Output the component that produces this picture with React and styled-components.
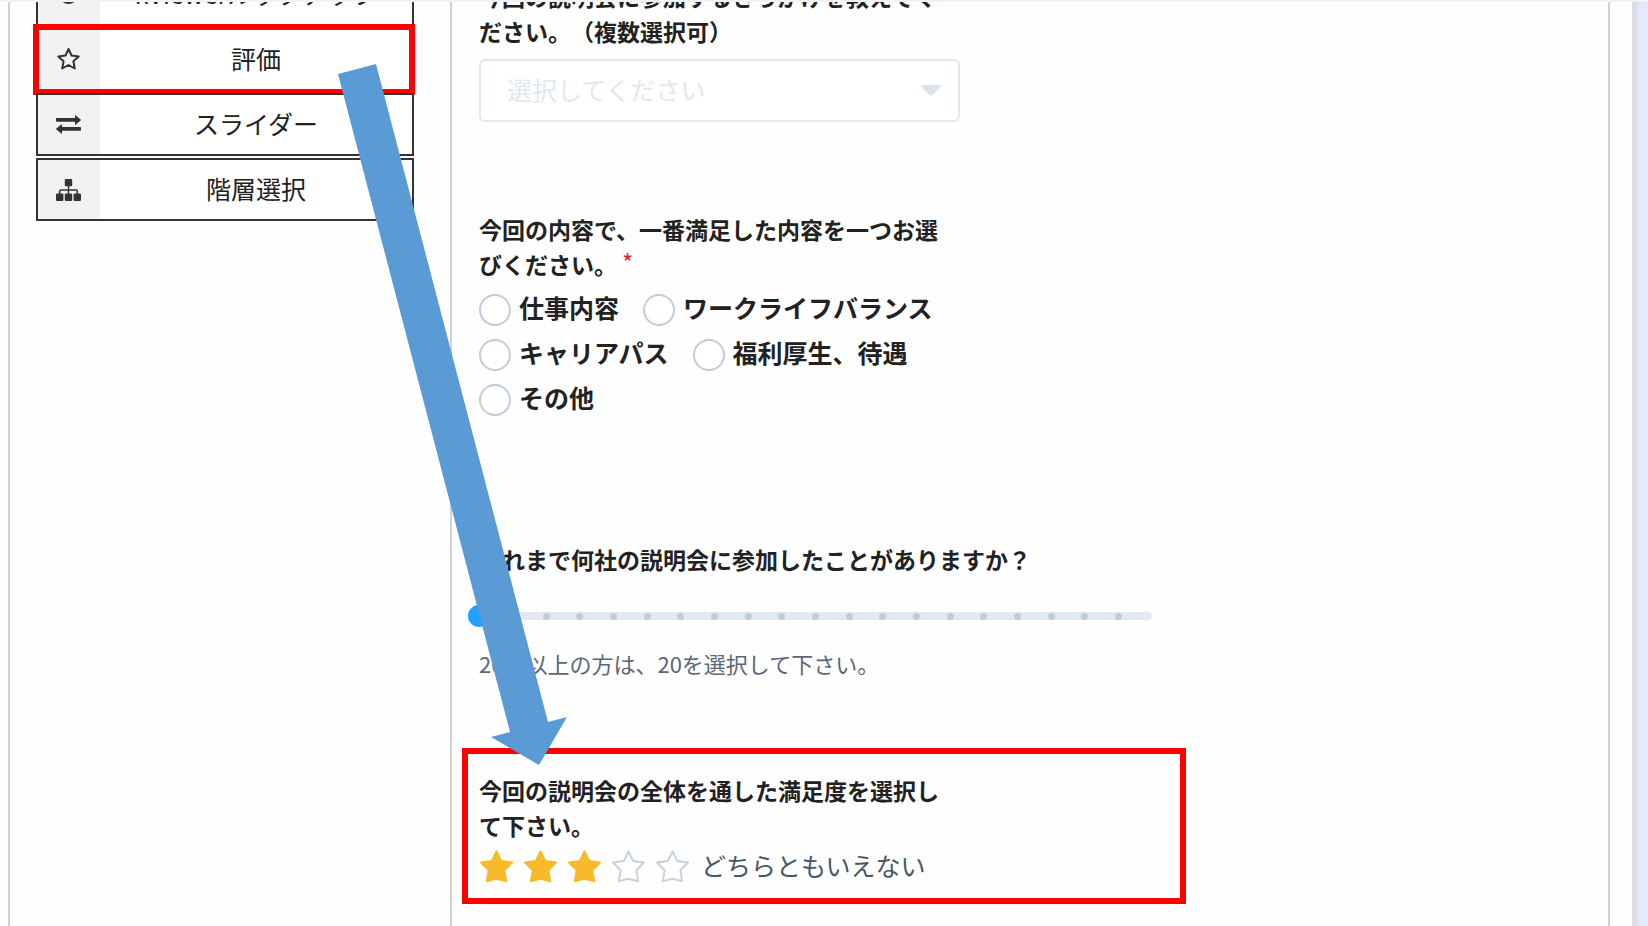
import React, { useState } from 'react';
import styled, { createGlobalStyle, css } from 'styled-components';

const GlobalStyle = createGlobalStyle`
  * {
    box-sizing: border-box;
  }

  body {
    margin: 0;
    background: #fefefe;
    color: #222222;
    font-family: 'Noto Sans CJK JP', 'Noto Sans', sans-serif;
    font-size: 25px;
    line-height: 35px;
    text-spacing-trim: space-all;
  }
`;

const Page = styled.div`
  position: relative;
  height: 100vh;
  display: flex;
  border-top: 2px solid #f2f2f2;
  overflow: hidden;
`;

const Sheet = styled.div`
  flex: 1;
  display: flex;
  padding: 0 22px 0 8px;
`;

const Gutter = styled.div`
  width: 16px;
  background: linear-gradient(to right, #dcdcde 0, #d9dded 4px, #e4eafa 8px);
`;

const Sidebar = styled.aside`
  width: 444px;
  padding: 0 36px 0 26px;
  border: solid #d2d2d2;
  border-width: 0 2px;
`;

const PartList = styled.ul`
  display: flex;
  flex-direction: column;
  gap: 2px;
  margin: -39px 0 0;
  padding: 0;
  list-style: none;
`;

const PartItem = styled.li`
  position: relative;
`;

const PartButton = styled.button`
  display: flex;
  width: 100%;
  height: 63px;
  padding: 0;
  border: 2px solid #333333;
  background: #ffffff;
  color: #222222;
  font: inherit;
  cursor: pointer;
`;

const PartIcon = styled.span`
  display: flex;
  align-items: center;
  justify-content: center;
  width: 62px;
  height: 100%;
  padding-right: 2px;
  background: #f2f2f2;
  color: #333333;
`;

const PartName = styled.span`
  flex: 1;
  align-self: center;
  padding-bottom: 3px;
`;

const Highlight = styled.div`
  position: absolute;
  inset: ${(props) => props.$inset};
  border: 6px solid #ff0000;
  pointer-events: none;
`;

const Main = styled.main`
  flex: 1;
  border-right: 2px solid #d2d2d2;
  overflow: hidden;
`;

const Form = styled.form`
  display: flex;
  flex-direction: column;
  gap: 90px;
  max-width: 727px;
  margin: -23px 0 0;
  padding: 0 27px;
`;

const Field = styled.div`
  position: relative;
  padding-bottom: ${(props) => props.$space || 0}px;
`;

const Group = styled.fieldset`
  min-width: 0;
  margin: 0;
  padding: 0;
  border: 0;
`;

const titleStyle = css`
  display: block;
  padding: 0;
  font-size: 23px;
  font-weight: 700;
`;

const Title = styled.label`
  ${titleStyle}
  max-width: ${(props) => (props.$wide ? 'none' : '480px')};
`;

const Legend = styled.legend`
  ${titleStyle}
  max-width: 480px;
`;

const Required = styled.span`
  margin-left: 5px;
  color: #e02020;
  font-size: 24px;
  font-weight: 400;
  line-height: 1;
  vertical-align: 2px;
`;

const SelectBox = styled.div`
  position: relative;
  max-width: 481px;
  margin-top: 10px;

  svg {
    position: absolute;
    top: 26px;
    right: 19px;
    pointer-events: none;
  }
`;

const Select = styled.select`
  display: block;
  width: 100%;
  height: 63px;
  padding: 0 26px 3px;
  border: 2px solid #e2e8f0;
  border-radius: 6px;
  background: #ffffff;
  color: #e2e8f0;
  font: inherit;
  appearance: none;
`;

const Options = styled.div`
  display: flex;
  flex-wrap: wrap;
  column-gap: 24px;
  max-width: 480px;
  padding-top: 4px;
`;

const Option = styled.label`
  display: flex;
  align-items: center;
  gap: 8px;
  height: 45px;
  padding-bottom: 2px;
  font-weight: 700;
`;

const Radio = styled.input`
  width: 32px;
  height: 32px;
  margin: 5px 0 0;
  border: 2px solid #c0ccda;
  border-radius: 50%;
  background: #ffffff;
  appearance: none;

  &:checked {
    border: 10px solid #20a0ff;
  }
`;

const SliderTrack = styled.div`
  position: relative;
  height: 8px;
  margin: 35px 0 26px;
  border-radius: 4px;
  background: #e4e8f1;
`;

const Steps = styled.div`
  display: grid;
  grid-template-columns: repeat(19, 1fr);
  align-items: center;
  justify-items: center;
  height: 8px;
  padding: 0 2.5%;
`;

const Step = styled.span`
  width: 7px;
  height: 7px;
  border-radius: 50%;
  background: #c0ccda;
`;

const Slider = styled.input`
  position: absolute;
  top: -7px;
  left: -11px;
  width: calc(100% + 22px);
  height: 22px;
  margin: 0;
  background: transparent;
  appearance: none;

  &::-webkit-slider-thumb {
    width: 22px;
    height: 22px;
    border-radius: 50%;
    background: #20a0ff;
    appearance: none;
  }
`;

const Help = styled.p`
  margin: 0;
  color: #5a6778;
  font-size: 22px;
`;

const Rating = styled.div`
  display: flex;
  align-items: center;
  gap: 9px;
  height: 36px;
  margin-top: 5px;
`;

const StarLabel = styled.label`
  position: relative;
  display: flex;
  width: 35px;
  cursor: pointer;
`;

const StarInput = styled.input`
  position: absolute;
  inset: 0;
  margin: 0;
  opacity: 0;
`;

const RatingText = styled.output`
  padding: 0 0 2px 2px;
  color: #475669;
`;

const ArrowOverlay = styled.svg`
  position: absolute;
  top: -2px;
  left: 0;
  pointer-events: none;
`;

const CircleIcon = () => (
  <svg width="25" height="25" viewBox="0 0 25 25" aria-hidden="true">
    <circle cx="12.5" cy="12.5" r="8" fill="none" stroke="currentColor" strokeWidth="3" />
  </svg>
);

const StarIcon = () => (
  <svg width="25" height="25" viewBox="0 0 25 25" aria-hidden="true">
    <path
      d="M12.5 2 L15.500 8.500 L22.700 9.400 L17.400 14.200 L18.800 21.500 L12.5 18 L6.200 21.500 L7.600 14.200 L2.300 9.400 L9.500 8.500 Z"
      fill="none"
      stroke="currentColor"
      strokeWidth="2"
      strokeLinejoin="round"
    />
  </svg>
);

const ExchangeIcon = () => (
  <svg width="25" height="19" viewBox="0 0 25 19" aria-hidden="true">
    <g fill="currentColor">
      <path d="M0.800 3 H19 V0.500 Q19 -0.200 19.800 0.400 L24.600 4.500 Q25.200 5 24.600 5.500 L19.800 9.600 Q19 10.200 19 9.400 V6.800 H0.800 Q0 6.800 0 6 V3.800 Q0 3 0.800 3 Z" />
      <path d="M24.200 12 H6 V9.600 Q6 8.800 5.200 9.400 L0.400 13.400 Q-0.200 13.900 0.400 14.400 L5.200 18.500 Q6 19.100 6 18.300 V15.800 H24.200 Q25 15.800 25 15 V12.800 Q25 12 24.200 12 Z" />
    </g>
  </svg>
);

const SitemapIcon = () => (
  <svg width="25" height="22" viewBox="0 0 25 22" aria-hidden="true">
    <g fill="currentColor">
      <rect x="8.800" y="0" width="7.400" height="7.200" rx="1" />
      <rect x="0" y="14.600" width="7.400" height="7.400" rx="1" />
      <rect x="8.800" y="14.600" width="7.400" height="7.400" rx="1" />
      <rect x="17.600" y="14.600" width="7.400" height="7.400" rx="1" />
    </g>
    <path d="M12.5 7 V15 M3.700 15 V12 Q3.700 11 4.700 11 H20.300 Q21.300 11 21.300 12 V15" fill="none" stroke="currentColor" strokeWidth="1.500" />
  </svg>
);

const parts = [
  { name: 'kViewerルックアップ', icon: CircleIcon },
  { name: '評価', icon: StarIcon, highlighted: true },
  { name: 'スライダー', icon: ExchangeIcon },
  { name: '階層選択', icon: SitemapIcon },
];

const contents = ['仕事内容', 'ワークライフバランス', 'キャリアパス', '福利厚生、待遇', 'その他'];

const ratings = ['不満', 'やや不満', 'どちらともいえない', 'やや満足', '満足'];

const Star = ({ filled }) => (
  <svg width="35" height="33" viewBox="0 0 35 33" aria-hidden="true">
    <path
      d="M17.5 1.5 L22.2 10.9 L33 12.5 L25.3 20.2 L27.2 31.3 L17.5 28.8 L7.8 31.3 L9.7 20.2 L2 12.5 L12.8 10.9 Z"
      fill={filled ? '#f7ba2a' : '#ffffff'}
      stroke={filled ? '#f7ba2a' : '#c6d1de'}
      strokeWidth="2"
      strokeLinejoin="round"
    />
  </svg>
);

const App = () => {
  const [count, setCount] = useState(0);
  const [score, setScore] = useState(3);

  return (
    <>
      <GlobalStyle />
      <Page>
        <Sheet>
          <Sidebar>
            <PartList>
              {parts.map(({ name, icon: Icon, highlighted }) => (
                <PartItem key={name}>
                  <PartButton type="button">
                    <PartIcon>
                      <Icon />
                    </PartIcon>
                    <PartName>{name}</PartName>
                  </PartButton>
                  {highlighted && <Highlight $inset="-4px -1px -4px -3px" />}
                </PartItem>
              ))}
            </PartList>
          </Sidebar>
          <Main>
            <Form>
              <Field>
                <Title htmlFor="trigger">今回の説明会に参加するきっかけを教えてください。（複数選択可）</Title>
                <SelectBox>
                  <Select id="trigger" defaultValue="">
                    <option value="">選択してください</option>
                  </Select>
                  <svg width="20" height="11" viewBox="0 0 20 11" aria-hidden="true">
                    <path d="M1 0 H19 Q20.500 0.500 19.500 1.800 L11.500 10 Q10 11.500 8.500 10 L0.500 1.800 Q-0.500 0.500 1 0 Z" fill="#dbe2ea" />
                  </svg>
                </SelectBox>
              </Field>

              <Field $space={31}>
                <Group>
                  <Legend>
                    今回の内容で、一番満足した内容を一つお選びください。
                    <Required>*</Required>
                  </Legend>
                  <Options>
                    {contents.map((label) => (
                      <Option key={label}>
                        <Radio type="radio" name="content" value={label} />
                        {label}
                      </Option>
                    ))}
                  </Options>
                </Group>
              </Field>

              <Field $space={2}>
                <Title $wide htmlFor="count">これまで何社の説明会に参加したことがありますか？</Title>
                <SliderTrack>
                  <Steps>
                    {Array.from({ length: 19 }, (_, i) => (
                      <Step key={i} />
                    ))}
                  </Steps>
                  <Slider
                    id="count"
                    type="range"
                    min="0"
                    max="20"
                    value={count}
                    onChange={(e) => setCount(Number(e.target.value))}
                  />
                </SliderTrack>
                <Help>20社以上の方は、20を選択して下さい。</Help>
              </Field>

              <Field>
                <Group>
                  <Legend>今回の説明会の全体を通した満足度を選択して下さい。</Legend>
                  <Rating>
                    {ratings.map((label, i) => (
                      <StarLabel key={label} aria-label={label}>
                        <StarInput
                          type="radio"
                          name="score"
                          checked={score === i + 1}
                          onChange={() => setScore(i + 1)}
                        />
                        <Star filled={i < score} />
                      </StarLabel>
                    ))}
                    <RatingText>{ratings[score - 1]}</RatingText>
                  </Rating>
                </Group>
                <Highlight $inset="-25px -34px -20px -17px" />
              </Field>
            </Form>
          </Main>
        </Sheet>
        <Gutter />
        <ArrowOverlay width="600" height="780" viewBox="0 0 600 780" aria-hidden="true">
          <polygon points="338,74 376,64 548,722 567,717 539,765 491,737 510,732" fill="#5b9bd5" />
        </ArrowOverlay>
      </Page>
    </>
  );
};

export default App;
